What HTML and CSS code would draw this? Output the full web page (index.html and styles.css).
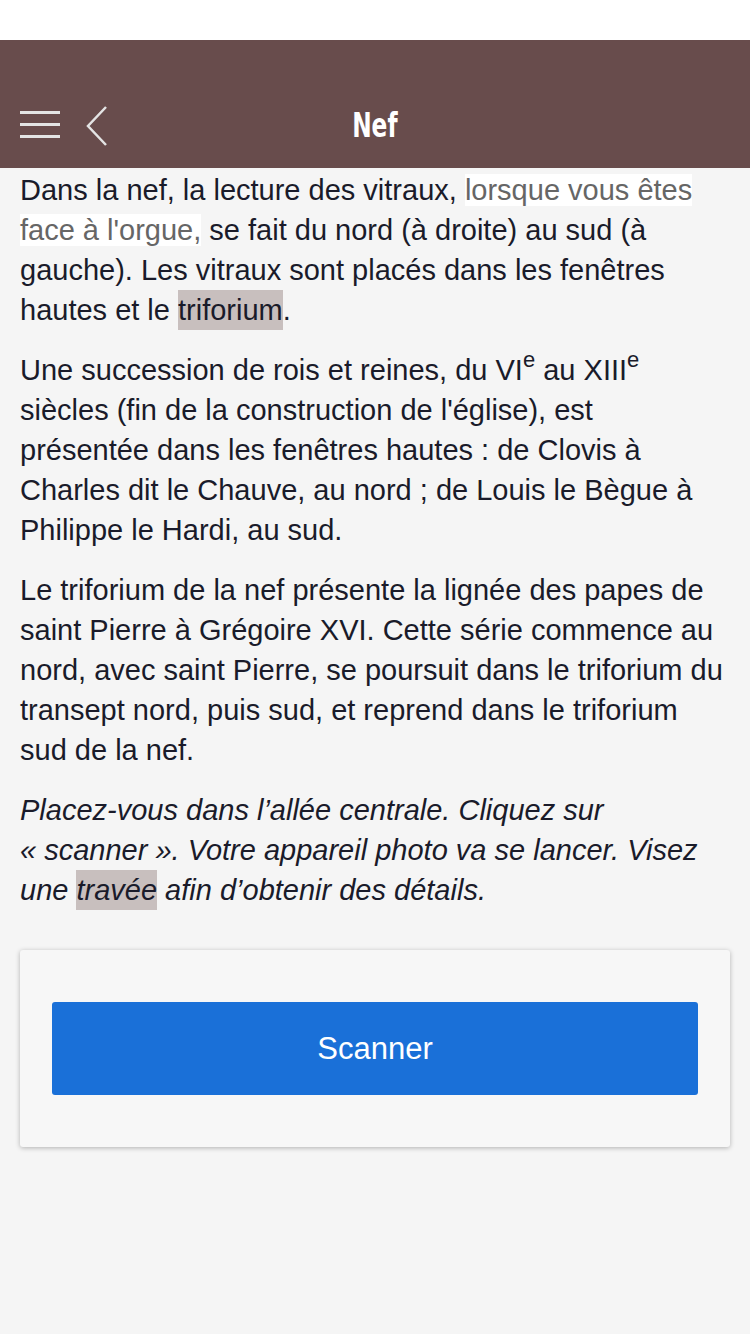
FILE: index.html
```html
<!DOCTYPE html>
<html lang="fr">
<head>
    <meta charset="UTF-8">
    <meta name="viewport" content="width=device-width, initial-scale=1.0">
    <title>Nef</title>
    <link rel="stylesheet" href="styles.css">
</head>
<body>
    <div class="status"></div>
    <header class="topbar">
        <div class="nav-icons">
            <svg class="burger" width="40" height="30" viewBox="0 0 40 30">
                <rect x="0" y="1" width="40" height="3" fill="#e4e4e4"/>
                <rect x="0" y="13" width="40" height="3" fill="#e4e4e4"/>
                <rect x="0" y="25" width="40" height="3" fill="#e4e4e4"/>
            </svg>
            <svg class="back" width="26" height="42" viewBox="0 0 26 42">
                <polyline points="22,2 4,21 22,40" fill="none" stroke="#e4e4e4" stroke-width="2.5"/>
            </svg>
        </div>
        <h1>Nef</h1>
    </header>

    <div class="content">
        <p>Dans la nef, la lecture des vitraux, <span class="note">lorsque vous êtes face à l'orgue,</span> se fait du nord (à droite) au sud (à gauche). Les vitraux sont placés dans les fenêtres hautes et le <span class="term">triforium</span>.</p>
        <p>Une succession de rois et reines, du VI<sup>e</sup> au XIII<sup>e</sup> siècles (fin de la construction de l'église), est présentée dans les fenêtres hautes : de Clovis à Charles dit le Chauve, au nord ; de Louis le Bègue à Philippe le Hardi, au sud.</p>
        <p>Le triforium de la nef présente la lignée des papes de saint Pierre à Grégoire XVI. Cette série commence au nord, avec saint Pierre, se poursuit dans le triforium du transept nord, puis sud, et reprend dans le triforium sud de la nef.</p>
        <p class="hint">Placez-vous dans l’allée centrale. Cliquez sur «&nbsp;scanner&nbsp;». Votre appareil photo va se lancer. Visez une <span class="term">travée</span> afin d’obtenir des détails.</p>

        <div class="card">
            <button type="button" class="scan-btn">Scanner</button>
        </div>
    </div>
</body>
</html>
```

FILE: styles.css
```css
*{
    margin: 0px;
    padding: 0px;
    box-sizing: border-box;
}
body {
    background-color: #f5f5f5;
    font-family: 'Liberation Sans', Arial, sans-serif;
    width: 750px;
    min-height: 1334px;
}
.status {
    height: 40px;
    background-color: #fff;
}
.topbar {
    height: 128px;
    background-color: #684c4c;
    position: relative;
    display: flex;
    align-items: center;
    justify-content: center;
    padding-top: 40px;
}
.nav-icons {
    position: absolute;
    left: 20px;
    top: 63px;
    display: flex;
    align-items: center;
    gap: 24px;
}
.back {
    margin-top: 2px;
}
h1 {
    color: #fff;
    font-family: 'DejaVu Sans Condensed', 'DejaVu Sans', sans-serif;
    font-weight: bold;
    font-size: 34px;
    transform: scaleX(0.76);
    margin-top: 2px;
}
.content {
    padding: 2px 24px 0px 20px;
}
p {
    font-size: 29px;
    line-height: 40px;
    color: #1a1b2a;
    margin-bottom: 20px;
}
.note {
    background-color: #fff;
    color: #666;
    padding: 0px;
}
.term {
    background-color: #c8bfbe;
    padding: 4px 0px;
}
sup {
    font-size: 22px;
    line-height: 0;
    vertical-align: 13px;
}
.hint {
    font-style: italic;
}
.card {
    margin-top: 40px;
    margin-right: -4px;
    background-color: #f7f7f7;
    border-radius: 3px;
    box-shadow: 0 1px 5px rgba(0, 0, 0, 0.28);
    padding: 52px 32px;
}
.scan-btn {
    display: block;
    width: 100%;
    height: 93px;
    background-color: #1a70d8;
    border: none;
    border-radius: 3px;
    color: #fff;
    font-family: 'Liberation Sans', Arial, sans-serif;
    font-size: 31px;
    outline: none;
}
```
